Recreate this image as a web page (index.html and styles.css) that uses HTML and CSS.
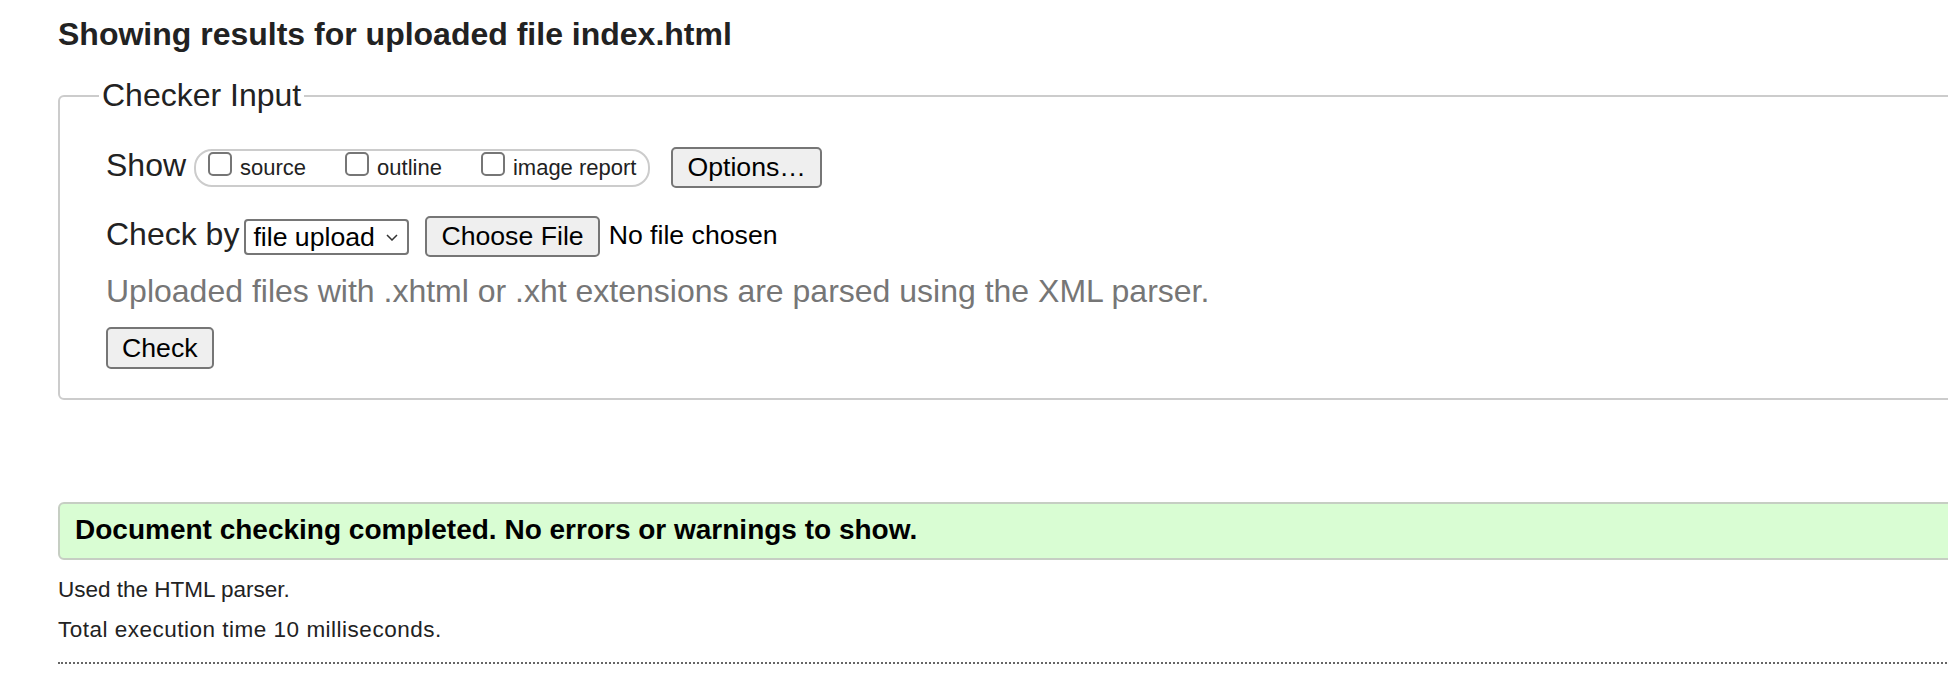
FILE: index.html
```html
<!DOCTYPE html>
<html lang="en">
<head>
<meta charset="utf-8">
<title>Nu Html Checker</title>
<link rel="stylesheet" href="styles.css">
</head>
<body>
<div class="page">
  <h2 class="title">Showing results for uploaded file index.html</h2>
  <form class="form">
    <fieldset class="checker">
      <legend class="legend">Checker Input</legend>
      <div class="row row-show">
        <span class="lbl lbl-show">Show</span>
        <div class="pill">
          <label class="opt"><input class="cb" type="checkbox"><span class="opt-text">source</span></label>
          <label class="opt"><input class="cb" type="checkbox"><span class="opt-text">outline</span></label>
          <label class="opt"><input class="cb" type="checkbox"><span class="opt-text">image report</span></label>
        </div>
        <button type="button" class="btn btn-options">Options…</button>
      </div>
      <div class="row row-by">
        <span class="lbl lbl-by">Check by</span>
        <span class="select-wrap">
          <select class="sel"><option>file upload</option></select>
          <svg class="chev" width="12" height="7" viewBox="0 0 12 7"><polyline points="1,1 6,6 11,1" fill="none" stroke="#333" stroke-width="1.5"/></svg>
        </span>
        <button type="button" class="btn btn-file">Choose File</button>
        <span class="nofile">No file chosen</span>
      </div>
      <p class="hint">Uploaded files with .xhtml or .xht extensions are parsed using the XML parser.</p>
      <div class="row-check"><button type="button" class="btn btn-check">Check</button></div>
    </fieldset>
  </form>
  <div class="success">Document checking completed. No errors or warnings to show.</div>
  <p class="meta meta-first">Used the HTML parser.</p>
  <p class="meta meta-time">Total execution time 10 milliseconds.</p>
  <hr class="dotted">
</div>
</body>
</html>
```
FILE: styles.css
```css
html, body {
  margin: 0;
  padding: 0;
  overflow: hidden;
  background: #fff;
}
body {
  font-family: "Liberation Sans", Arial, Helvetica, sans-serif;
  color: #222;
}
.page {
  width: 2200px;
  padding-left: 58px;
}
.title {
  margin: 0 0 24px 0;
  padding-top: 16px;
  font-size: 32px;
  line-height: 37px;
  font-weight: bold;
  color: #222;
}
.form { margin: 0; }
.checker {
  margin: 0;
  min-width: 0;
  border: 2px solid #ccc;
  border-radius: 6px;
  padding: 32px 0 29px 46px;
}
.legend {
  font-size: 32px;
  line-height: 37px;
  padding: 0 3px;
  margin-left: -7px;
  color: #222;
}
.row {
  display: flex;
  align-items: center;
  height: 43px;
}
.row-by { margin-top: 26px; }
.lbl {
  font-size: 32px;
  line-height: 37px;
  color: #222;
}
.lbl-show { margin-bottom: 5px; }
.lbl-by { margin-bottom: 4px; }
.pill {
  display: flex;
  align-items: flex-start;
  gap: 39px;
  box-sizing: border-box;
  height: 38px;
  margin-left: 8px;
  padding: 1px 12px 0 12px;
  border: 2px solid #ccc;
  border-radius: 18px;
}
.opt {
  display: flex;
  align-items: flex-end;
  gap: 8px;
  height: 24px;
}
.cb {
  appearance: none;
  -webkit-appearance: none;
  box-sizing: border-box;
  width: 24px;
  height: 24px;
  margin: 0;
  border: 2px solid #767676;
  border-radius: 5px;
  background: #fff;
}
.opt-text {
  font-size: 22px;
  line-height: 22px;
  margin-bottom: -3px;
  color: #222;
}
.btn {
  box-sizing: border-box;
  height: 41px;
  padding: 0 14px;
  font-family: "Liberation Sans", Arial, sans-serif;
  font-size: 26.67px;
  color: #000;
  background: #efefef;
  border: 2px solid #767676;
  border-radius: 5px;
}
.btn-options { margin-left: 21px; }
.select-wrap {
  position: relative;
  display: inline-flex;
  margin-left: 5px;
}
.sel {
  appearance: none;
  -webkit-appearance: none;
  box-sizing: border-box;
  width: 165px;
  height: 36px;
  padding: 0 0 0 7px;
  font-family: "Liberation Sans", Arial, sans-serif;
  font-size: 26.67px;
  color: #000;
  background: #fff;
  border: 2px solid #767676;
  border-radius: 4px;
}
.chev {
  position: absolute;
  right: 11px;
  top: 15px;
}
.btn-file { margin-left: 16px; }
.nofile {
  margin-left: 9px;
  margin-bottom: 2px;
  font-size: 26.67px;
  color: #000;
}
.hint {
  margin: 15px 0 0 0;
  font-size: 32px;
  line-height: 37px;
  color: #767676;
}
.row-check { margin-top: 17px; }
.btn-check { height: 42px; }
.success {
  margin-top: 102px;
  box-sizing: border-box;
  height: 58px;
  padding: 0 0 2px 15px;
  border: 2px solid #c6cec3;
  border-radius: 6px;
  background: #d9fdd3;
  font-size: 28px;
  line-height: 52px;
  font-weight: bold;
  color: #000;
}
.meta {
  margin: 14px 0 0 0;
  font-size: 22.5px;
  line-height: 26px;
  color: #222;
}
.meta-first { margin-top: 17px; }
.meta-time { letter-spacing: 0.5px; }
.dotted {
  margin: 19px 0 0 0;
  height: 0;
  border: 0;
  border-top: 2px dotted #666;
}
```
